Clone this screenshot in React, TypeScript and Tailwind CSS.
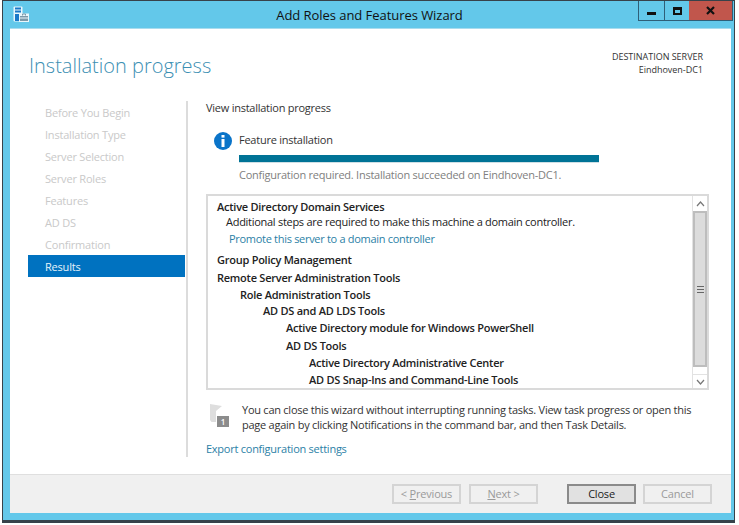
import React from "react";

const nav = ["Before You Begin", "Installation Type", "Server Selection", "Server Roles", "Features", "AD DS", "Confirmation"];

function Btn({ children, primary, cls }: { children: React.ReactNode; primary?: boolean; cls: string }) {
  return (
    <div className={`h-[20px] w-[69px] flex items-center justify-center text-[11px] tracking-[-0.2px] border-2 ${cls} ${primary ? "border-[#8a8a8a] bg-[#e1e1e1] text-[#222]" : "border-[#d4d4d4] bg-[#f0f0f0] text-[#9a9a9a]"}`}>
      {children}
    </div>
  );
}

function Line({ text, cls }: { text: string; cls: string }) {
  return <div className={`absolute whitespace-nowrap ${cls}`}>{text}</div>;
}

export default function App() {
  return (
    <div className="w-[739px] h-[525px] bg-white overflow-hidden" style={{ fontFamily: "'Open Sans','Noto Sans',sans-serif" }}>
      <div className="ml-[2px] w-[733px] h-[523px] border-x border-b-[3px] border-t border-[#37424a] bg-[#63c8ea] flex flex-col">
        {/* title bar */}
        <div className="h-[27px] shrink-0 flex relative">
          <div className="pl-[10px] pt-[5px]">
            <svg width="17" height="17" viewBox="0 0 17 17">
              <rect x="0.5" y="0.5" width="9" height="15" rx="1" fill="#e8f6fb" />
              <rect x="2" y="1.5" width="6" height="2" fill="#1a78c8" />
              <rect x="2" y="4.5" width="6" height="2" fill="#1a78c8" />
              <rect x="2" y="8" width="4" height="7" fill="#1a78c8" />
              <path d="M6 7.5h10v8.5H6z" fill="#e8f6fb" />
              <path d="M7 10h8v5H7z" fill="#7c98a8" />
              <path d="M9.5 9.5V8h3v1.5" stroke="#7c98a8" fill="none" />
              <path d="M7 12h8" stroke="#e8f6fb" />
            </svg>
          </div>
          <div className="absolute left-0 right-0 top-[5px] text-center text-[13px] text-[#111] pl-[2px] tracking-[-0.05px]">Add Roles and Features Wizard</div>
          <div className="ml-auto mr-[1px] h-[20px] flex border-x border-b border-[#2f5f78]">
            <div className="w-[26px] border-r border-[#2f5f78] flex items-center justify-center">
              <div className="w-[9px] h-[3px] mt-[5px] bg-[#111]" />
            </div>
            <div className="w-[24px] flex items-center justify-center">
              <div className="w-[9px] h-[8px] border-2 border-t-[3px] border-[#111]" />
            </div>
            <div className="w-[43px] bg-[#c1564c] flex items-center justify-center">
              <svg width="9" height="9" viewBox="0 0 9 9"><path d="M1 1l7 7M8 1L1 8" stroke="#111" strokeWidth="2.2" /></svg>
            </div>
          </div>
        </div>

        {/* client */}
        <div className="ml-[7px] mr-[3px] h-[485px] bg-white flex flex-col border-t border-[#a9dcee]">
          <div className="h-[445px] flex flex-col shrink-0">
            <div className="h-[72px] shrink-0 flex justify-between pl-[19px] pr-[28px]">
              <div className="mt-[21px] text-[20px] font-light text-[#3c8fb3] leading-[32px]">Installation progress</div>
              <div className="mt-[22px] text-right text-[9px] leading-[12.5px] text-[#333] tracking-[-0.02px]">
                <div>DESTINATION SERVER</div>
                <div>Eindhoven-DC1</div>
              </div>
            </div>
            <div className="flex">
              <div className="w-[178px] h-[356px] shrink-0 border-r-2 border-[#dcdcdc] pl-[18px]">
                <div>
                  {nav.map((n) => (
                    <div key={n} className="h-[22px] pl-[17px] pt-[2px] flex items-center text-[11px] text-[#c9c9c9] tracking-[-0.2px]">{n}</div>
                  ))}
                  <div className="h-[22px] pl-[17px] pt-[2px] mr-[1px] flex items-center text-[11px] text-[#e6f2fa] bg-[#0072c0] tracking-[-0.2px]">Results</div>
                </div>
              </div>
              <div className="pl-[18px] flex-1 text-[11px] text-[#333] tracking-[-0.25px]">
                <div className="leading-[16px] -mt-[1px]">View installation progress</div>
                <div className="mt-[16px] flex">
                  <div className="w-[18px] h-[18px] ml-[8px] rounded-full bg-[#0a74c9] text-white flex items-center justify-center">
                    <svg width="4" height="12" viewBox="0 0 4 12"><rect x="0.5" y="0" width="3" height="2.6" fill="#fff" /><rect x="0.5" y="4" width="3" height="8" fill="#fff" /></svg>
                  </div>
                  <div className="ml-[7px] w-[360px]">
                    <div className="leading-[16px] text-[#333]">Feature installation</div>
                    <div className="mt-[7px] h-[8px] bg-[#007396] border-b border-[#cfdfe5]" />
                    <div className="mt-[4px] leading-[16px] text-[#808080]">Configuration required. Installation succeeded on Eindhoven-DC1.</div>
                  </div>
                </div>
                <div className="mt-[11px] w-[503px] h-[196px] border-2 border-[#dadada] flex">
                  <div className="relative flex-1 bg-white text-[#222]">
                    <Line text="Active Directory Domain Services" cls="left-[9px] top-[3px] font-semibold" />
                    <Line text="Additional steps are required to make this machine a domain controller." cls="left-[18px] top-[18px] tracking-[-0.28px]" />
                    <Line text="Promote this server to a domain controller" cls="left-[21px] top-[35px] text-[#2b7fa6] tracking-[-0.3px]" />
                    <Line text="Group Policy Management" cls="left-[9px] top-[56px] font-semibold" />
                    <Line text="Remote Server Administration Tools" cls="left-[9px] top-[74px] font-semibold" />
                    <Line text="Role Administration Tools" cls="left-[32px] top-[91px] font-semibold" />
                    <Line text="AD DS and AD LDS Tools" cls="left-[55px] top-[107px] font-semibold" />
                    <Line text="Active Directory module for Windows PowerShell" cls="left-[78px] top-[124px] font-semibold" />
                    <Line text="AD DS Tools" cls="left-[78px] top-[142px] font-semibold" />
                    <Line text="Active Directory Administrative Center" cls="left-[101px] top-[159px] font-semibold" />
                    <Line text="AD DS Snap-Ins and Command-Line Tools" cls="left-[101px] top-[176px] font-semibold" />
                  </div>
                  <div className="w-[15px] shrink-0 border-l border-[#e2e2e2] flex flex-col">
                    <div className="h-[15px] flex items-center justify-center">
                      <svg width="9" height="6" viewBox="0 0 9 6"><path d="M1 5l3.5-4L8 5" stroke="#777" fill="none" strokeWidth="1.2" /></svg>
                    </div>
                    <div className="h-[156px] bg-[#dcdcdc] border-2 border-[#bdbdbd] flex items-center justify-center">
                      <div className="w-[7px] h-[7px] border-y border-[#666] flex items-center"><div className="w-full h-[1px] bg-[#666]" /></div>
                    </div>
                    <div className="h-[7px]" />
                    <div className="flex-1 flex items-center justify-center border-t border-[#e2e2e2]">
                      <svg width="9" height="6" viewBox="0 0 9 6"><path d="M1 1l3.5 4L8 1" stroke="#777" fill="none" strokeWidth="1.2" /></svg>
                    </div>
                  </div>
                </div>
                <div className="mt-[13px] flex">
                  <div className="w-[36px] shrink-0 pt-[1px] pl-[4px]">
                    <div className="relative w-[20px] h-[24px]">
                      <svg width="12" height="18" viewBox="0 0 12 18">
                        <path d="M0 0l12 2-6 5v11H1.5L0 16z" fill="#dedede" />
                      </svg>
                      <div className="absolute left-[7px] top-[12px] w-[12px] h-[11px] bg-[#8c8c8c] text-white text-[8px] font-semibold leading-[11px] text-center tracking-normal">1</div>
                    </div>
                  </div>
                  <div className="leading-[14.5px] text-[#333] whitespace-nowrap">
                    <div>You can close this wizard without interrupting running tasks. View task progress or open this</div>
                    <div>page again by clicking Notifications in the command bar, and then Task Details.</div>
                  </div>
                </div>
                <div className="mt-[9px] leading-[16px] text-[#2b7fa6]">Export configuration settings</div>
              </div>
            </div>
          </div>
          {/* footer */}
          <div className="flex-1 bg-[#f0f0f0] border-t border-[#dfdfdf] flex items-start pt-[9px] text-[#999]">
            <Btn cls="ml-[382px]"><span>&lt; <u>P</u>revious</span></Btn>
            <Btn cls="ml-[8px]"><span><u>N</u>ext &gt;</span></Btn>
            <Btn cls="ml-[29px]" primary>Close</Btn>
            <Btn cls="ml-[7px]">Cancel</Btn>
          </div>
        </div>
      </div>
    </div>
  );
}
